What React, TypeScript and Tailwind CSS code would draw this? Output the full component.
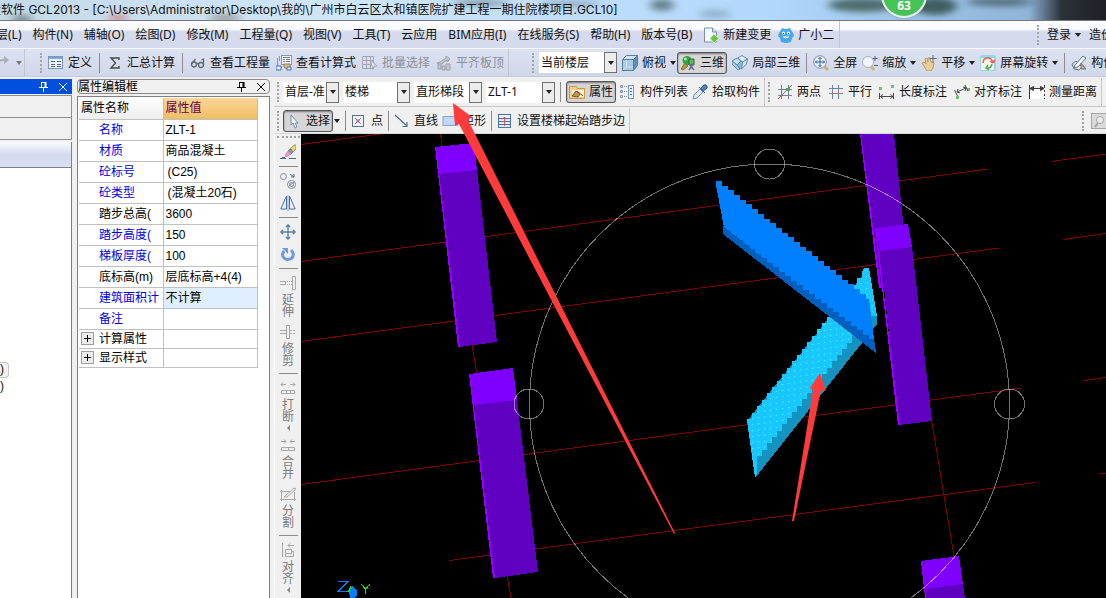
import type {ReactNode} from 'react';
import clsx from 'clsx';

const UI_FONT = "font-['Noto_Sans','Noto_Sans_CJK_SC',sans-serif]";
const TITLE_FONT = "font-['Inter','Noto_Sans_CJK_SC',sans-serif]";
const GRID_FONT = "font-['Liberation_Sans','Noto_Sans_CJK_SC',sans-serif]";

/* ---------- icons ---------- */

const ICONS: Record<string, ReactNode> = {
  redo: (
    <g fill="none" stroke="#a9adb8" strokeWidth="2">
      <path d="M4 12V9q0-4 5-4h2" />
      <path d="M10 1v8l5-4z" fill="#a9adb8" stroke="none" />
    </g>
  ),
  define: (
    <g>
      <rect x="0.500" y="1.500" width="14" height="12" fill="#eef4fd" stroke="#7c93bb" />
      <rect x="1" y="2" width="13" height="2" fill="#7fa6e0" />
      <path d="M3 6.500h4M3 9.500h4M9 6.500h4M9 9.500h4M9 11.500h4M3 11.500h4" stroke="#4a6796" />
    </g>
  ),
  sum: <path d="M12 5V3H4l4.500 5L4 13h8v-2" fill="none" stroke="#4a4a4a" strokeWidth="1.400" />,
  glasses: (
    <g fill="none" stroke="#5d6878" strokeWidth="1.300">
      <circle cx="4" cy="9.500" r="2.500" />
      <circle cx="11" cy="10" r="2.500" />
      <path d="M6.500 9q1-1 2 0M1.500 9l4-5M13.500 10V4l-2 1" />
    </g>
  ),
  formula: (
    <g>
      <rect x="5.500" y=".500" width="10" height="9" fill="#f5f7fa" stroke="#8b95a5" />
      <path d="M7 2.500h7M7 4.500h2M10 4.500h4M7 6.500h2M10 6.500h4" stroke="#6c7890" />
      <path d="M1.500 3v9M3.500 1v5M1 12.500h5" stroke="#7f98bd" />
      <path d="M8 9h6v3l-3 2-3-2z" fill="#e5c271" stroke="#8c8052" />
      <path d="M0 11h5v4H0zM11 12h4v3h-4z" fill="#e8f2fe" stroke="#3f73c4" />
    </g>
  ),
  batch: (
    <g fill="none" stroke="#a2a7b3">
      <path d="M.500 1.500h11v12H.500zM1 5.500h11M1 9.500h11M4.500 2v11M8.500 2v11" />
      <path d="M8 5l7 6-3 .300-1 3z" fill="#e3e5ec" />
    </g>
  ),
  flush: (
    <g fill="#c3c6ce" stroke="#9b9fa9">
      <path d="M4 7l6-4V1l4 3-3 3V5L4 10l-3-2z" />
      <path d="M2 9h3v5H2zM6 11h3v4H6zM10 9h4v6h-4z" />
    </g>
  ),
  cube: (
    <g stroke="#5580a5">
      <path d="M.500 4.500l4-4h11l-4 4z" fill="#d5e8f4" />
      <path d="M11.500 4.500l4-4v10l-4 5z" fill="#5d8fb7" />
      <path d="M.500 4.500h11v11H.500z" fill="#a9cbe4" />
      <path d="M4.500 5v7L1 15M5 12h6" fill="none" stroke="#cfe3f2" />
    </g>
  ),
  threeD: (
    <g>
      <path d="M1 14l4-6 3 3-5 4z" fill="#c3943f" stroke="#84713c" />
      <circle cx="7" cy="5.500" r="4.500" fill="#37a04a" />
      <circle cx="5.500" cy="4" r="1.500" fill="#a7e8a7" />
      <path d="M9 4h5v6H9z" fill="#63b45e" stroke="#2e6c37" />
      <path d="M9 9l5 6M13 9l-4 6" stroke="#5b6f93" strokeWidth="1.500" />
    </g>
  ),
  local3d: (
    <g fill="#c9e0f1" stroke="#5b8bb0">
      <path d="M0 6l5-3 4 3-4 4z" />
      <path d="M6 3l4-2.500 5.500 3.500-5 3z" fill="#e4f0f8" />
      <path d="M5 10l4-4 3 3-4 5z" fill="#8fb8d6" />
      <path d="M10.500 7l5-3-1 5-5 5z" fill="#d4e6f2" />
      <path d="M0 6v3l6 6 2-1-3-4z" fill="#a9cbe4" />
    </g>
  ),
  full: (
    <g>
      <path d="M11 11l4 4" stroke="#d9ab67" strokeWidth="3" />
      <circle cx="7" cy="7" r="6.300" fill="#e6f0fa" stroke="#8291a8" />
      <path
        d="M7 2.500v9M2.500 7h9M5.500 4L7 2.500 8.500 4M5.500 10L7 11.500 8.500 10M4 5.500L2.500 7 4 8.500M10 5.500L11.500 7 10 8.500"
        fill="none"
        stroke="#3d5f94"
      />
    </g>
  ),
  zoom: (
    <g>
      <path d="M9 11l3 4" stroke="#dfb06a" strokeWidth="3" />
      <circle cx="6" cy="7" r="5.500" fill="#f1f6fc" stroke="#a5b2c4" />
      <path d="M13 1v5M10.500 3.500h5M12 10.500h4" stroke="#4b6184" />
    </g>
  ),
  pan: (
    <g>
      <path d="M1 8l2-1 2 2-1-5 2-1 1 4V3h2l1 4h2l1 1-1 5-2 3H6z" fill="#e8cf96" stroke="#bd9a58" />
      <path d="M12 0v8M8.500 3.500h7" stroke="#5c6a86" />
    </g>
  ),
  orbit: (
    <g>
      <rect x="0" y="0" width="16" height="16" rx="2" fill="#93d8ea" />
      <rect x="1" y="3" width="13" height="12" fill="#f7f3e8" />
      <path d="M3 8q0-5 5-5 4 0 5 5M13 8l2-3M13 8l-3-2" fill="none" stroke="#e2604f" strokeWidth="1.500" />
      <path d="M12 9q-1 5-6 4l2-3M6 13l3 2" fill="none" stroke="#4fae56" strokeWidth="1.500" />
    </g>
  ),
  compTool: (
    <g>
      <path d="M1 9l4-3 6 6-3 3-5-1z" fill="#dfe8f2" stroke="#60738f" />
      <path d="M4 10L12 1l3 2-8 9-4 1z" fill="#f6f8fb" stroke="#60738f" />
      <path d="M10 8l5 6h-5z" fill="#dda858" stroke="#60738f" />
    </g>
  ),
  props: (
    <g>
      <path d="M.500 2.500h7l1 2h7v10H.500z" fill="#f2cf85" stroke="#d9953b" />
      <path d="M3 6h12v7H3z" fill="#fdf3d7" />
      <path d="M3 12l4-5 4 3-2 3zM8 7l6 5" fill="#c89455" stroke="#6d5135" />
    </g>
  ),
  list: (
    <g fill="none" stroke="#8b98ad">
      <path d="M.500 1.500h2v2h-2zM.500 6.500h2v2h-2zM.500 11.500h2v2h-2z" />
      <path d="M4 2.500h3M4 7.500h3M4 12.500h3" strokeDasharray="1 1" />
      <rect x="8.500" y="1.500" width="5" height="13" fill="#e8f0fa" stroke="#7c9ac5" />
      <path d="M10 4.500h2M10 7.500h2M10 10.500h2" stroke="#3468ad" />
    </g>
  ),
  picker: (
    <g>
      <path d="M1 15l1-4 6-6 3 3-6 6z" fill="#dbe9fa" stroke="#6c8db5" />
      <path d="M7 3l6 6M9 4l3-3q2-1 3 1t-1 3l-3 2z" fill="#4d80c4" stroke="#35639d" />
    </g>
  ),
  twoPoint: (
    <g fill="none" stroke="#7083a6">
      <path d="M4.500 1v14M11.500 1v14M1 5.500h14M1 11.500h14" />
      <path d="M1 15L15 1" stroke="#bd6061" />
      <rect x="9" y="4" width="4" height="3" fill="#59a558" stroke="none" />
    </g>
  ),
  parallel: (
    <g fill="none" stroke="#7083a6">
      <path d="M4.500 1v14M10.500 1v14M1 4.500h14" />
      <path d="M1 9.500h14" stroke="#b87372" />
    </g>
  ),
  length: (
    <g>
      <path d="M0 3h3v3H0zM12 1h3v3h-3z" fill="#6cc370" />
      <path d="M.500 9v6M14.500 9v6M1 12.500h13M4 10.500L1.500 12.500 4 14.500M11.500 10.500l2.500 2-2.500 2" fill="none" stroke="#4a4a4a" />
    </g>
  ),
  alignDim: (
    <g>
      <path d="M13 4h3v3h-3zM2 12h3v3H2z" fill="#6cc370" />
      <path d="M.500 6l3 6M11 1l3 6M3 8l9-4M3 8l1-3M3 8l3 1M12 4L9 3M12 4l-1 3" fill="none" stroke="#4a4a4a" />
    </g>
  ),
  measure: (
    <g>
      <path d="M1 5h14v10H1z" fill="#fff" />
      <path
        d="M.500 1v14M15.500 1v3M15.500 6v2M15.500 10v2M15.500 14v1M1 4.500h14M4.500 2.500L1 4.500l3.500 2zM11.500 2.500l3.500 2-3.500 2z"
        fill="#3b3b3b"
        stroke="#3b3b3b"
      />
    </g>
  ),
  cursor: <path d="M5 2v10l2-2 2 5 2-1-2-4h3z" fill="#fff" stroke="#7187a8" />,
  point: (
    <g fill="none">
      <rect x="1.500" y="2.500" width="11" height="11" fill="#f0f5fc" stroke="#5f7190" />
      <path d="M4 5l6 6M10 5l-6 6" stroke="#5f7fc0" />
      <path d="M6 7h2v2H6z" fill="#d06a78" stroke="#d06a78" />
    </g>
  ),
  line: (
    <g fill="none" stroke="#4f6c9c" strokeWidth="1.200">
      <path d="M1 2l12 11M13 9v4.500H8.500" />
    </g>
  ),
  rect: <rect x="1" y="3.500" width="14" height="9" fill="#c2d8f8" stroke="#7fa3dc" />,
  stair: (
    <g fill="none">
      <rect x="1.500" y="1.500" width="12" height="13" fill="#e7f0fc" stroke="#4a71b0" />
      <path d="M2 5.500h11M2 8.500h11M2 11.500h11" stroke="#4a71b0" />
      <path d="M7.500 13V4M5 6.500L7.500 4 10 6.500" stroke="#d0595a" />
    </g>
  ),
  brush: (
    <g>
      <path d="M9 6l5-5h2v4l-4 4z" fill="#efcf6f" stroke="#b39a56" />
      <path d="M8 7l3-2 2 3-3 3z" fill="#8b96ad" stroke="#6d7a94" />
      <path d="M5 10l3-3 3 3-3 3H5z" fill="#e39ac4" />
      <path d="M0 14.500h6M9 14.500h7M2 13.500h3" stroke="#4a6a9e" />
    </g>
  ),
  copy: (
    <g fill="none" stroke="#7e8ca3">
      <circle cx="3.500" cy="3.500" r="3" />
      <circle cx="11.500" cy="11.500" r="4" />
      <circle cx="11.500" cy="11.500" r="2" />
      <path d="M9 13l5-4" />
      <path d="M10 1l4 3M14 1v3h-3" stroke="#416ba5" />
    </g>
  ),
  mirror: (
    <g fill="none" stroke="#4c71ae">
      <path d="M6.500 1v13H.800zM9.500 1v13h5.700z" fill="#e6eefb" />
      <path d="M8 0v16" stroke="#8da4c9" />
    </g>
  ),
  move: (
    <g fill="none" stroke="#56809b" strokeWidth="1.300">
      <path d="M8 1v14M1 8h14M6 3l2-2 2 2M6 13l2 2 2-2M3 6L1 8l2 2M13 6l2 2-2 2" />
    </g>
  ),
  rotate: (
    <g>
      <path d="M4 5q-3 4 0 7t8 0q3-4-1-8" fill="none" stroke="#6f9ae0" strokeWidth="3" />
      <path d="M2 2h6v6z" fill="#6f9ae0" />
    </g>
  ),
  extend: (
    <g fill="none" stroke="#a8a8a8">
      <path d="M12.500 1.500h3v13h-3zM0 6.500h6M0 9.500h6M5.500 7v2" />
      <path d="M7 6.500h5M7 9.500h5" strokeDasharray="1 1" />
    </g>
  ),
  trim: (
    <g fill="none" stroke="#a8a8a8">
      <path d="M6.500 1.500h3v13h-3zM0 6.500h6M0 9.500h6" />
      <path d="M10 6.500h6M10 9.500h6" strokeDasharray="2 1" />
    </g>
  ),
  breakLine: (
    <g fill="none" stroke="#a8a8a8">
      <path d="M1 4.500h5M3 2.500l-2 2 2 2M10 4.500h5M13 2.500l2 2-2 2M1.500 10.500h13v3h-13zM6.500 10v4M10.500 10v4" />
    </g>
  ),
  join: (
    <g fill="none" stroke="#a8a8a8">
      <path d="M1 4.500h5M4 2.500l2 2-2 2M10 4.500h5M12 2.500l-2 2 2 2M1.500 10.500h13v3h-13zM8.500 10v4" />
    </g>
  ),
  cut: (
    <g fill="none" stroke="#a8a8a8">
      <path d="M0 5.500h10M0 13.500h16M1.500 4v11M14.500 6v9M4 11l10-9 2 1-9 8z" />
    </g>
  ),
  align: (
    <g fill="none" stroke="#a8a8a8">
      <path d="M2.500 1v14M8 3.500h6M10 1.500l-2 2 2 2M5.500 7.500h6v2h2v5h-8zM5 11.500h6M11.500 9v3" />
    </g>
  ),
  newDoc: (
    <g>
      <path d="M1.500 1h8l4 4v10h-12z" fill="#f5faff" stroke="#7890b0" />
      <path d="M9.500 1v4h4" fill="#cfdff2" stroke="#7890b0" />
      <path d="M11 7l5 4.500-5 4.500-4-4.500z" fill="#6dc23c" stroke="#d9f3c8" />
    </g>
  ),
  mascot: (
    <g>
      <path d="M3 3l1-2 3 1h2l3-1 1 2 2 3 1 3-2 2-1 4-4 1H7l-4-1-1-4-2-2 1-3z" fill="#45a8ea" />
      <circle cx="5.500" cy="6" r="1.500" fill="#fff" />
      <circle cx="10.500" cy="6" r="1.500" fill="#fff" />
      <path d="M5.500 6v1M10.500 6v1" stroke="#1c5c94" />
      <path d="M5 9.500q3 3 6 0" fill="#fff" stroke="#fff" />
    </g>
  ),
  find: (
    <g fill="none" stroke="#a5a5a5">
      <rect x=".500" y=".500" width="16" height="15" fill="#dadada" />
      <circle cx="9" cy="7" r="3.500" fill="#eee" />
      <path d="M7 10l-3 4" strokeWidth="2" />
    </g>
  ),
};

function Icon({name}: {name: string}) {
  return (
    <svg viewBox="0 0 16 16" className="h-4 w-4 shrink-0" aria-hidden="true">
      {ICONS[name]}
    </svg>
  );
}

function Pin() {
  return (
    <svg viewBox="0 0 10 10" className="h-2.5 w-2.5" fill="none" stroke="currentColor" aria-hidden="true">
      <path d="M2.500 0v5M2 .500h5M0 5.500h9M4.500 6v4" />
      <path d="M6.500 0v5" strokeWidth="2" />
    </svg>
  );
}

function Cross() {
  return (
    <svg viewBox="0 0 8 8" className="h-2 w-2" fill="none" stroke="currentColor" aria-hidden="true">
      <path d="M0 0l8 8M8 0L0 8" />
    </svg>
  );
}

/* ---------- toolbar parts ---------- */

function Caret({muted}: {muted?: boolean}) {
  return (
    <span
      className={clsx(
        'border-x-[3px] border-t-4 border-x-transparent',
        muted ? 'border-t-[#777]' : 'border-t-[#222]',
      )}
    />
  );
}

function Grip() {
  return <span className="ml-[3px] h-5 w-0 shrink-0 self-center border-l-2 border-dotted border-[#a4a4a4]" />;
}

function Sep() {
  return <span className="mx-px h-5 w-px shrink-0 self-center bg-[#8b8b8b]" />;
}

type ToolProps = {
  icon?: string;
  label: string;
  caret?: boolean;
  active?: boolean;
  disabled?: boolean;
};

function Tool({icon, label, caret, active, disabled}: ToolProps) {
  return (
    <button
      type="button"
      disabled={disabled}
      className={clsx(
        'flex h-[22px] shrink-0 items-center gap-1 whitespace-nowrap',
        active && 'rounded-[3px] border border-[#555] bg-[#d6d6d8] px-0.5 shadow-[inset_0_1px_2px_#777]',
        disabled && 'text-[#8b8f9a]',
      )}
    >
      {icon && <Icon name={icon} />}
      {label}
      {caret && <Caret />}
    </button>
  );
}

function Combo({label, value, width}: {label: string; value: string; width: string}) {
  return (
    <span className={clsx('flex h-[21px] shrink-0 bg-white', width)}>
      <select
        aria-label={label}
        defaultValue={value}
        className="min-w-0 flex-1 appearance-none overflow-hidden bg-white pl-0.5 text-clip outline-none"
      >
        <option>{value}</option>
      </select>
      <span className="flex w-[13px] shrink-0 items-center justify-center border border-[#707070] bg-[#ececec]">
        <Caret />
      </span>
    </span>
  );
}

/* ---------- property panel ---------- */

const PROPS = [
  {name: '名称', value: 'ZLT-1', blue: true},
  {name: '材质', value: '商品混凝土', blue: true},
  {name: '砼标号', value: '(C25)', blue: true, inset: true},
  {name: '砼类型', value: '(混凝土20石)', blue: true, inset: true},
  {name: '踏步总高(', value: '3600'},
  {name: '踏步高度(', value: '150', blue: true},
  {name: '梯板厚度(', value: '100', blue: true},
  {name: '底标高(m)', value: '层底标高+4(4)'},
  {name: '建筑面积计', value: '不计算', blue: true, selected: true},
  {name: '备注', value: '', blue: true},
];

function PropertyPanel() {
  return (
    <section className={clsx('flex w-[193px] shrink-0 flex-col text-black', GRID_FONT)}>
      <header className="flex h-[15px] items-center rounded-sm border border-[#8a8a8a] pr-1 leading-3">
        <h2 className="flex-1">属性编辑框</h2>
        <button type="button" aria-label="固定" className="mr-2.5">
          <Pin />
        </button>
        <button type="button" aria-label="关闭">
          <Cross />
        </button>
      </header>
      <div className="mt-0.5 flex-1 border-x border-t border-[#808080] bg-white pt-px pl-px">
        <table className="w-[179px] table-fixed border-collapse leading-3">
          <thead>
            <tr className="h-[21px] text-left">
              <th className="w-[84px] border-r border-b border-[#c0c0c0] bg-linear-to-b from-white to-[#ededed] pl-0.5 font-normal">
                属性名称
              </th>
              <th className="border-r border-b border-[#c0c0c0] bg-linear-to-b from-[#f9d597] to-[#f1bd62] pl-0.5 font-normal text-[#600050]">
                属性值
              </th>
            </tr>
          </thead>
          <tbody>
            {PROPS.map((row) => (
              <tr key={row.name} className="h-[21px] whitespace-nowrap">
                <td
                  className={clsx(
                    'overflow-hidden border-r border-b border-[#c0c0c0] pl-5',
                    row.blue && 'text-[#0000e6]',
                  )}
                >
                  {row.name}
                </td>
                <td
                  className={clsx(
                    'overflow-hidden border-r border-b border-[#c0c0c0]',
                    row.inset ? 'pl-1' : 'pl-0.5',
                    row.selected && 'bg-[#e0efff]',
                  )}
                >
                  {row.value}
                </td>
              </tr>
            ))}
            {['计算属性', '显示样式'].map((name) => (
              <tr key={name} className="h-[19px]">
                <td className="border-r border-b border-[#c0c0c0] pl-0.5">
                  <div className="flex items-center gap-[5px]">
                    <button
                      type="button"
                      aria-label={`展开${name}`}
                      className="flex h-[13px] w-[13px] items-center justify-center border border-[#a0a0a0] bg-[#ececec]"
                    >
                      <svg viewBox="0 0 7 7" className="h-[7px] w-[7px]" stroke="#000" aria-hidden="true">
                        <path d="M0 3.500h7M3.500 0v7" />
                      </svg>
                    </button>
                    {name}
                  </div>
                </td>
                <td className="border-r border-b border-[#c0c0c0]" />
              </tr>
            ))}
          </tbody>
        </table>
      </div>
    </section>
  );
}

function NavPanel() {
  return (
    <section className="flex w-[72px] shrink-0 flex-col">
      <header className="flex h-[15px] items-center justify-end bg-[#0050e0] pr-[5px] text-white">
        <button type="button" aria-label="固定导航" className="mr-2.5">
          <Pin />
        </button>
        <button type="button" aria-label="关闭导航">
          <Cross />
        </button>
      </header>
      <div className="mt-px h-[23px] border-y border-r border-[#8f8f8f]" />
      <div className="h-[22px] border-r border-b border-[#8f8f8f]" />
      <div className="mt-0.5 h-[26px] border-r border-b border-[#808080] bg-linear-to-b from-[#fafaff] via-[#d5dbee] to-[#d9def0]" />
      <div className={clsx('flex-1 overflow-hidden border-r border-[#808080] bg-white pt-[194px] leading-4', GRID_FONT)}>
        <p className="h-4 w-[9px] rounded-r-sm border border-l-0 border-[#c4c4c4] bg-[#f3f3f3] leading-3">)</p>
        <p>)</p>
      </div>
    </section>
  );
}

/* ---------- edit tools beside the view ---------- */

function SideTool({icon, label, more, name}: {icon: string; label?: string; more?: boolean; name?: string}) {
  return (
    <button type="button" aria-label={name} className="flex shrink-0 flex-col items-center text-[#7c7c7c]">
      <Icon name={icon} />
      {label && <span className="mt-[3px] w-3 leading-3 break-all">{label}</span>}
      {more && <span className="mt-0.5 border-y-[3px] border-r-[3px] border-y-transparent border-r-[#888]" />}
    </button>
  );
}

function SideSep() {
  return <span className="h-px w-[19px] shrink-0 bg-[#8b8b8b]" />;
}

function SideBar() {
  return (
    <nav
      aria-label="编辑工具"
      className="flex w-[27px] shrink-0 flex-col items-center gap-1.5 overflow-hidden border-l border-white bg-[#f0f0f0] pt-0.5"
    >
      <span className="h-0 w-[23px] border-t-2 border-dotted border-[#a4a4a4]" />
      <SideTool icon="brush" name="格式刷" />
      <SideSep />
      <SideTool icon="copy" name="复制" />
      <SideTool icon="mirror" name="镜像" />
      <SideSep />
      <SideTool icon="move" name="移动" />
      <SideTool icon="rotate" name="旋转" />
      <SideSep />
      <SideTool icon="extend" label="延伸" />
      <SideTool icon="trim" label="修剪" />
      <SideSep />
      <SideTool icon="breakLine" label="打断" more />
      <SideTool icon="join" label="合并" />
      <SideTool icon="cut" label="分割" />
      <SideSep />
      <SideTool icon="align" label="对齐" more />
    </nav>
  );
}

/* ---------- 3D view ---------- */

const AXES = [
  'M301 144.500L380 134',
  'M301 261.500L988 169',
  'M301 341.500L999 248',
  'M301 484.500L1021 388',
  'M449 560.500L1035 482.500',
  'M1051 161.500L1106 154',
  'M1063 239.500L1106 233.500',
  'M1084 380.500L1106 377.500',
  'M1099 473.500H1106',
  'M440.500 134L442 147M472 345L477 375M507 575L511 598M931 417L955 562',
];

const COLUMNS = [
  {top: '435,147 474,143 477,170 439,174', side: '439,174 477,170 497,342 459,347', edge: '435,147 436,147 460,347 458,347'},
  {top: '469,374 513,368 517,400 473,405', side: '473,405 517,400 538,572 495,578', edge: '469,374 470,374 495,578 493,578'},
  {side: '861,134 894,134 910,288 880,288', edge: '860,134 861,134 881,288 879,288'},
  {top: '875,228 908,224 912,247 880,251', side: '880,251 912,247 932,421 899,425', edge: '875,228 876,228 900,425 898,425'},
  {top: '921,561 959,556 963,584 925,589', side: '925,589 963,584 965,598 926,598', edge: '921,561 922,561 926,598 925,598'},
];

// each flight: upper edge climbs tread by tread, soffit is a second colour below
const LOWER_FLIGHT = `M755 478L747 419${'h5v-6.400'.repeat(23)}L864 268H869L877 316H871L862 330${'h-5v6.300'.repeat(21)}V474Z`;
const UPPER_FLIGHT = `M716 182V181${'h6v4.700'.repeat(25)}L869 299L874 339H869${'v-4.500h-6'.repeat(24)}V233L716 185Z`;

function ModelView() {
  return (
    <main className="relative min-w-0 flex-1 bg-black">
      <svg
        viewBox="301 134 805 464"
        preserveAspectRatio="xMinYMin slice"
        className="block h-full w-full"
        shapeRendering="crispEdges"
        role="img"
        aria-label="三维视图"
      >
        <defs>
          <pattern id="dots" width="6" height="6" patternUnits="userSpaceOnUse" patternTransform="skewY(-8)">
            <rect x="2" y="2" width="1" height="1" fill="#25fff0" />
          </pattern>
        </defs>
        <g fill="none" stroke="#800000">
          {AXES.map((d) => (
            <path key={d} d={d} />
          ))}
        </g>
        {COLUMNS.map((c) => (
          <g key={c.side}>
            <polygon points={c.side} fill="#6000c0" />
            {c.top && <polygon points={c.top} fill="#8000ff" />}
            <polygon points={c.edge} fill="#9a00ff" />
          </g>
        ))}

        <path d="M747 421L755 478L877 324V318L869 268H864V274Z" fill="#1593c0" />
        <path d={LOWER_FLIGHT} fill="#1ac6ff" />
        <path d={LOWER_FLIGHT} fill="url(#dots)" />

        <path d="M723 226L723 234L876 353L873 335Z" fill="#0060c0" />
        <path d={UPPER_FLIGHT} fill="#0080ff" />
        <path d="M723 226V234L876 353L874 338V347Z" fill="#0060c0" />

        <g fill="none" stroke="#fff" strokeOpacity=".45">
          <circle cx="769.500" cy="404" r="240" />
          <circle cx="769.500" cy="164" r="15" />
          <circle cx="529" cy="404" r="15" />
          <circle cx="1009.500" cy="404" r="15" />
        </g>

        <g fill="none">
          <path d="M338 581.500H348L338 591.500H348" stroke="#0080ff" />
          <path d="M361 584L365.500 589V594M370 584L365.500 589" stroke="#00ff00" />
          <path d="M351 585L348 591L351 598H354Z" fill="#00ff00" />
          <path d="M352 586L357 590V595L354 598H350L349 592Z" fill="#0080ff" />
        </g>
      </svg>

      {/* callout arrows, the long one reaches up into the toolbars */}
      <svg
        viewBox="301 134 805 464"
        preserveAspectRatio="xMinYMin slice"
        className="pointer-events-none absolute inset-0 z-10 h-full w-full overflow-visible"
        fill="#ff3b3b"
        aria-hidden="true"
      >
        <path d="M453 103L472 117L468 120L675 533L674 534L459 124L455 126Z" />
        <path d="M820 373L826 391L821 390L794 521L792 521L813 390L810 388Z" />
      </svg>
    </main>
  );
}

/* ---------- window ---------- */

const MENUS = [
  '构件(N)',
  '辅轴(O)',
  '绘图(D)',
  '修改(M)',
  '工程量(Q)',
  '视图(V)',
  '工具(T)',
  '云应用',
  'BIM应用(I)',
  '在线服务(S)',
  '帮助(H)',
  '版本号(B)',
];

// desktop wallpaper showing through the glass title bar
function TitleGlass() {
  return (
    <svg
      viewBox="0 0 1106 20"
      preserveAspectRatio="none"
      className="absolute inset-0 h-full w-full"
      aria-hidden="true"
    >
      <defs>
        <linearGradient id="sky">
          <stop offset="0" stopColor="#c4dae8" />
          <stop offset=".3" stopColor="#cfe6fa" />
          <stop offset=".7" stopColor="#b2d7fd" />
          <stop offset=".93" stopColor="#8fb4d8" />
          <stop offset=".96" stopColor="#2c3138" />
          <stop offset="1" stopColor="#1d2026" />
        </linearGradient>
        <filter id="soft">
          <feGaussianBlur stdDeviation="5 3" />
        </filter>
      </defs>
      <rect width="1106" height="20" fill="url(#sky)" />
      <g filter="url(#soft)">
        <ellipse cx="22" cy="19" rx="10" ry="4" fill="#6c8388" />
        <ellipse cx="118" cy="18" rx="10" ry="4" fill="#cf8d93" />
        <ellipse cx="225" cy="18" rx="16" ry="4" fill="#9a9ba2" />
        <ellipse cx="480" cy="3" rx="30" ry="3" fill="#7d93a0" />
        <ellipse cx="570" cy="4" rx="30" ry="3" fill="#8ca6ba" />
        <ellipse cx="662" cy="5" rx="12" ry="6" fill="#64808c" />
        <ellipse cx="715" cy="14" rx="16" ry="4" fill="#8fb0c8" />
        <ellipse cx="862" cy="5" rx="34" ry="7" fill="#4b6d6c" />
        <ellipse cx="935" cy="6" rx="22" ry="9" fill="#3f5f62" />
        <ellipse cx="1000" cy="2" rx="34" ry="4" fill="#506a78" />
      </g>
    </svg>
  );
}

export default function App() {
  return (
    <div className={clsx('flex h-screen flex-col overflow-hidden bg-[#f0f0f0] text-xs text-[#111]', UI_FONT)}>
      <div className="relative flex h-5 shrink-0 items-center">
        <TitleGlass />
        <h1 className={clsx('relative -ml-[11px] leading-5 whitespace-nowrap', TITLE_FONT)}>
          量软件 GCL2013 - [C:\Users\Administrator\Desktop\我的\广州市白云区太和镇医院扩建工程一期住院楼项目.GCL10]
        </h1>
        <span className="absolute top-[-28px] right-[179px] z-20 flex h-[46px] w-[46px] items-end justify-center rounded-full border-2 border-[#eee] bg-[#45c455] pb-1 text-xs leading-3 font-bold text-white shadow">
          63
        </span>
      </div>

      <nav
        aria-label="菜单"
        className="flex h-7 shrink-0 items-center border-t border-[#777] bg-linear-to-b from-[#fbfbff] from-30% to-[#d5daed] to-40% whitespace-nowrap"
      >
        <div className="flex h-full items-center gap-[11px] border-r border-[#c3c6d0] pr-[5px]">
          <button type="button" className="-ml-4">
            楼层(L)
          </button>
          {MENUS.map((label) => (
            <button key={label} type="button">
              {label}
            </button>
          ))}
          <div className="flex gap-[7px]">
            <Tool icon="newDoc" label="新建变更" />
            <Tool icon="mascot" label="广小二" />
          </div>
        </div>
        <div className="ml-auto flex h-full w-[72px] items-center gap-2 overflow-hidden">
          <Grip />
          <Tool label="登录" caret />
          <Tool label="造价" />
        </div>
      </nav>

      <div
        role="toolbar"
        aria-label="常用工具"
        className="flex h-[29px] shrink-0 items-center overflow-hidden border-y border-t-[#f8f8ff] border-b-[#c6cad8] bg-linear-to-b from-[#dde2f2] to-[#d0d7ea]"
      >
        <div className="flex h-full w-[25px] shrink-0 items-center gap-1.5 overflow-hidden border-r border-[#c3c6d0]">
          <span className="-ml-1.5 flex">
            <Icon name="redo" />
          </span>
          <Caret muted />
        </div>
        <div className="ml-3 flex h-full shrink-0 items-center gap-1.5 border-r border-[#c3c6d0] pr-1">
          <Grip />
          <Tool icon="define" label="定义" />
          <Sep />
          <Tool icon="sum" label="汇总计算" />
          <Sep />
          <Tool icon="glasses" label="查看工程量" />
          <Tool icon="formula" label="查看计算式" />
          <Tool icon="batch" label="批量选择" disabled />
          <Tool icon="flush" label="平齐板顶" disabled />
        </div>
        <div className="ml-5 flex h-full shrink-0 items-center gap-[5px]">
          <Grip />
          <Combo label="楼层范围" value="当前楼层" width="w-[78px]" />
          <div className="flex gap-px">
            <Tool icon="cube" label="俯视" caret />
            <Tool icon="threeD" label="三维" active />
          </div>
          <Tool icon="local3d" label="局部三维" />
          <Sep />
          <Tool icon="full" label="全屏" />
          <Tool icon="zoom" label="缩放" caret />
          <Tool icon="pan" label="平移" caret />
          <Tool icon="orbit" label="屏幕旋转" caret />
          <Sep />
          <Tool icon="compTool" label="构件" />
        </div>
      </div>

      <div className="flex min-h-0 flex-1">
        <div className="mt-0.5 flex shrink-0 gap-[5px]">
          <NavPanel />
          <PropertyPanel />
        </div>

        <div className="ml-1 flex min-w-0 flex-1 flex-col">
          <div
            role="toolbar"
            aria-label="构件工具"
            className="flex h-[30px] shrink-0 items-center border-b border-[#c8c8c8] pt-px"
          >
            <div className="flex h-full items-center gap-1 border-r border-[#c8c8c8] pr-1">
              <Grip />
              <Combo label="楼层" value="首层-准" width="w-14" />
              <Combo label="构件类型" value="楼梯" width="w-[67px]" />
              <Combo label="构件子类型" value="直形梯段" width="w-[68px]" />
              <Combo label="构件名称" value="ZLT-1" width="w-[69px]" />
              <Sep />
              <Tool icon="props" label="属性" active />
              <Tool icon="list" label="构件列表" />
              <Tool icon="picker" label="拾取构件" />
            </div>
            <div className="flex h-full items-center gap-[7px] border-r border-[#c8c8c8] pr-1">
              <Grip />
              <Tool icon="twoPoint" label="两点" />
              <Tool icon="parallel" label="平行" />
              <Tool icon="length" label="长度标注" />
              <Tool icon="alignDim" label="对齐标注" />
              <Tool icon="measure" label="测量距离" />
            </div>
          </div>

          <div
            role="toolbar"
            aria-label="绘制工具"
            className="flex h-[27px] shrink-0 items-center border-b border-[#d8d8d8] pt-px"
          >
            <div className="flex h-full items-center gap-1 border-r border-[#c8c8c8] pr-1">
              <Grip />
              <div className="flex items-center gap-px">
                <Tool icon="cursor" label="选择" active />
                <Caret />
              </div>
              <Sep />
              <Tool icon="point" label="点" />
              <Sep />
              <Tool icon="line" label="直线" />
              <Tool icon="rect" label="矩形" />
              <Sep />
              <Tool icon="stair" label="设置楼梯起始踏步边" />
            </div>
            <div className="ml-auto flex w-[27px] items-center gap-[7px] overflow-hidden">
              <Grip />
              <button type="button" aria-label="查找">
                <Icon name="find" />
              </button>
            </div>
          </div>

          <div className="flex min-h-0 flex-1">
            <SideBar />
            <ModelView />
          </div>
        </div>
      </div>
    </div>
  );
}
